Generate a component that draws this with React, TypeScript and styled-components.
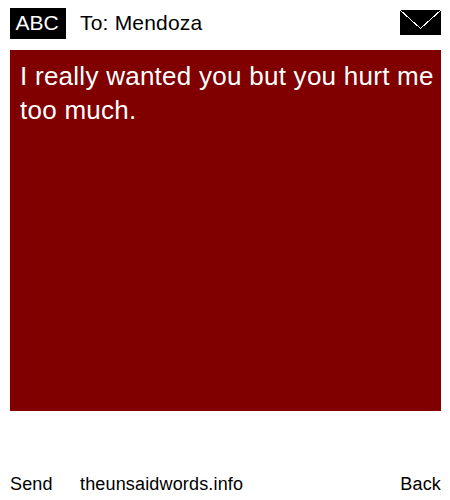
import React from "react";
import styled, { createGlobalStyle } from "styled-components";

const Global = createGlobalStyle`
  html, body {
    margin: 0;
    padding: 0;
    background: #fff;
  }
`;

const Page = styled.div`
  width: 450px;
  height: 500px;
  box-sizing: border-box;
  padding: 8px 9px 0 10px;
  display: flex;
  flex-direction: column;
  font-family: "Liberation Sans", Arial, sans-serif;
  color: #000;
`;

const Header = styled.header`
  display: flex;
  align-items: flex-start;
  height: 31px;
`;

const Badge = styled.div`
  width: 56px;
  height: 31px;
  box-sizing: border-box;
  padding-right: 2px;
  background: #000;
  color: #fff;
  font-size: 21px;
  line-height: 30px;
  text-align: center;
`;

const Recipient = styled.div`
  margin-left: 14px;
  font-size: 21px;
  letter-spacing: 0.2px;
  line-height: 30px;
  flex: 1;
`;

const Envelope = styled.svg`
  display: block;
  width: 41px;
  height: 25px;
  margin-top: 2px;
  shape-rendering: crispEdges;
`;

const Message = styled.main`
  margin-top: 11px;
  height: 361px;
  background: #800000;
  color: #fff;
  box-sizing: border-box;
  padding: 9px 5px 8px 10px;
  font-size: 26px;
  letter-spacing: 0.26px;
  line-height: 34px;
`;

const Footer = styled.footer`
  margin-top: 61px;
  display: flex;
  font-size: 18px;
  letter-spacing: 0.16px;
  line-height: 24px;
`;

const Send = styled.span`
  width: 70px;
`;

const Site = styled.span`
  flex: 1;
`;

const App = () => (
  <Page>
    <Global />
    <Header>
      <Badge>ABC</Badge>
      <Recipient>To: Mendoza</Recipient>
      <Envelope viewBox="0 0 41 25">
        <rect width="41" height="25" fill="#000" />
        <path d="M0 0 L20.5 18.5 L41 0" fill="none" stroke="#fff" strokeWidth="1" />
      </Envelope>
    </Header>
    <Message>I really wanted you but you hurt me too much.</Message>
    <Footer>
      <Send>Send</Send>
      <Site>theunsaidwords.info</Site>
      <span>Back</span>
    </Footer>
  </Page>
);

export default App;
